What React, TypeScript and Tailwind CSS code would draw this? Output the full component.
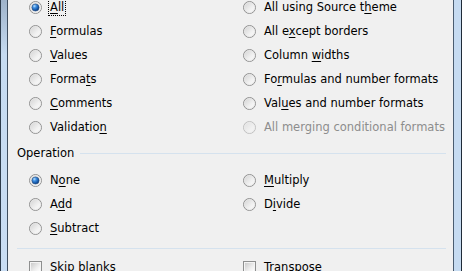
import React from "react";

// "&" marks the access-key letter that gets underlined
const Label: React.FC<{ text: string; disabled?: boolean; focus?: boolean }> = ({ text, disabled, focus }) => {
  const i = text.indexOf("&");
  const before = i >= 0 ? text.slice(0, i) : text;
  const key = i >= 0 ? text.charAt(i + 1) : "";
  const after = i >= 0 ? text.slice(i + 2) : "";
  return (
    <span
      className={`whitespace-nowrap leading-[13px] ${disabled ? "text-[#8d8d8d]" : "text-black"} ${
        focus ? "outline outline-1 outline-dotted outline-black outline-offset-[1px]" : ""
      }`}
    >
      {before}
      {key && <span className="underline underline-offset-[2px]">{key}</span>}
      {after}
    </span>
  );
};

const Radio: React.FC<{ checked?: boolean; disabled?: boolean }> = ({ checked, disabled }) => (
  <svg width="13" height="13" viewBox="0 0 13 13" className={`shrink-0 ${disabled ? "opacity-50" : ""}`}>
    <defs>
      <linearGradient id="rbody" x1="0" y1="0" x2="1" y2="1">
        <stop offset="0" stopColor="#cfcfcf" />
        <stop offset="0.6" stopColor="#f1f1f1" />
        <stop offset="1" stopColor="#ffffff" />
      </linearGradient>
      <radialGradient id="rdot" cx="0.35" cy="0.3" r="0.75">
        <stop offset="0" stopColor="#b9e1ff" />
        <stop offset="0.35" stopColor="#3c8de0" />
        <stop offset="0.8" stopColor="#114f9e" />
        <stop offset="1" stopColor="#0b3a78" />
      </radialGradient>
    </defs>
    <circle cx="6.5" cy="6.5" r="6" fill="url(#rbody)" stroke="#929292" strokeWidth="1" />
    <circle cx="6.5" cy="6.5" r="5" fill="none" stroke="#e6e6e6" strokeWidth="0.8" />
    {checked && <circle cx="6.5" cy="6.5" r="3.6" fill="url(#rdot)" stroke="#2a4f80" strokeWidth="0.6" />}
  </svg>
);

const Check: React.FC = () => (
  <svg width="13" height="13" viewBox="0 0 13 13" className="shrink-0">
    <defs>
      <linearGradient id="cbody" x1="0" y1="0" x2="1" y2="1">
        <stop offset="0" stopColor="#cbcbcb" />
        <stop offset="0.6" stopColor="#efefef" />
        <stop offset="1" stopColor="#ffffff" />
      </linearGradient>
    </defs>
    <rect x="0.5" y="0.5" width="12" height="12" fill="#f4f4f4" stroke="#8e8f8f" />
    <rect x="2" y="2" width="9" height="9" fill="url(#cbody)" />
  </svg>
);

const Row: React.FC<{ children: React.ReactNode }> = ({ children }) => (
  <div className="flex items-center gap-2 h-6">{children}</div>
);

const paste = [
  ["&All", "All using Source t&heme"],
  ["&Formulas", "All e&xcept borders"],
  ["&Values", "Column &widths"],
  ["Forma&ts", "Fo&rmulas and number formats"],
  ["&Comments", "Val&ues and number formats"],
  ["Validatio&n", "All merging conditional formats"],
];

const ops = [
  ["N&one", "&Multiply"],
  ["A&dd", "D&ivide"],
  ["&Subtract", ""],
];

export default function App() {
  return (
    <div
      className="w-[462px] h-[271px] overflow-hidden flex bg-[#f0f0f0] text-[11.5px]"
      style={{ fontFamily: '"DejaVu Sans", Tahoma, sans-serif' }}
    >
      {/* left window frame */}
      <div className="w-[8px] shrink-0 flex">
        <div className="w-px bg-[#2d3b4b]" />
        <div className="w-[6px] bg-gradient-to-b from-[#9fb3ca] via-[#c6dbf1] via-[20%] to-[#c9ddf3]" />
        <div className="w-px bg-[#3e4d5e]" />
      </div>

      <div className="flex-1 -mt-[5px]">
        <div className="grid grid-cols-[214px_1fr] pl-[21px]">
          {paste.map(([a, b], i) => (
            <React.Fragment key={i}>
              <Row>
                <Radio checked={i === 0} />
                <Label text={a} focus={i === 0} />
              </Row>
              <Row>
                <Radio disabled={i === 5} />
                <Label text={b} disabled={i === 5} />
              </Row>
            </React.Fragment>
          ))}
        </div>

        <div className="h-[29px] flex items-center pl-[9px] pr-[7px] gap-[6px]">
          <span className="text-black leading-[13px]">Operation</span>
          <div className="flex-1 h-px bg-[#d5e2ee]" />
        </div>

        <div className="grid grid-cols-[214px_1fr] pl-[21px]">
          {ops.map(([a, b], i) => (
            <React.Fragment key={i}>
              <Row>
                <Radio checked={i === 0} />
                <Label text={a} />
              </Row>
              {b ? (
                <Row>
                  <Radio />
                  <Label text={b} />
                </Row>
              ) : (
                <div />
              )}
            </React.Fragment>
          ))}
        </div>

        <div className="mt-2 ml-[9px] mr-[7px] h-px bg-[#d5e2ee]" />

        <div className="grid grid-cols-[214px_1fr] pl-[21px] mt-[6px]">
          <Row>
            <Check />
            <Label text="Skip &blanks" />
          </Row>
          <Row>
            <Check />
            <Label text="Transpos&e" />
          </Row>
        </div>
      </div>

      {/* right window frame */}
      <div className="w-[9px] shrink-0 flex">
        <div className="w-px bg-[#4a5c70]" />
        <div className="w-[7px] bg-[#c6dbf1]" />
        <div className="w-px bg-[#1f2b38]" />
      </div>
    </div>
  );
}
